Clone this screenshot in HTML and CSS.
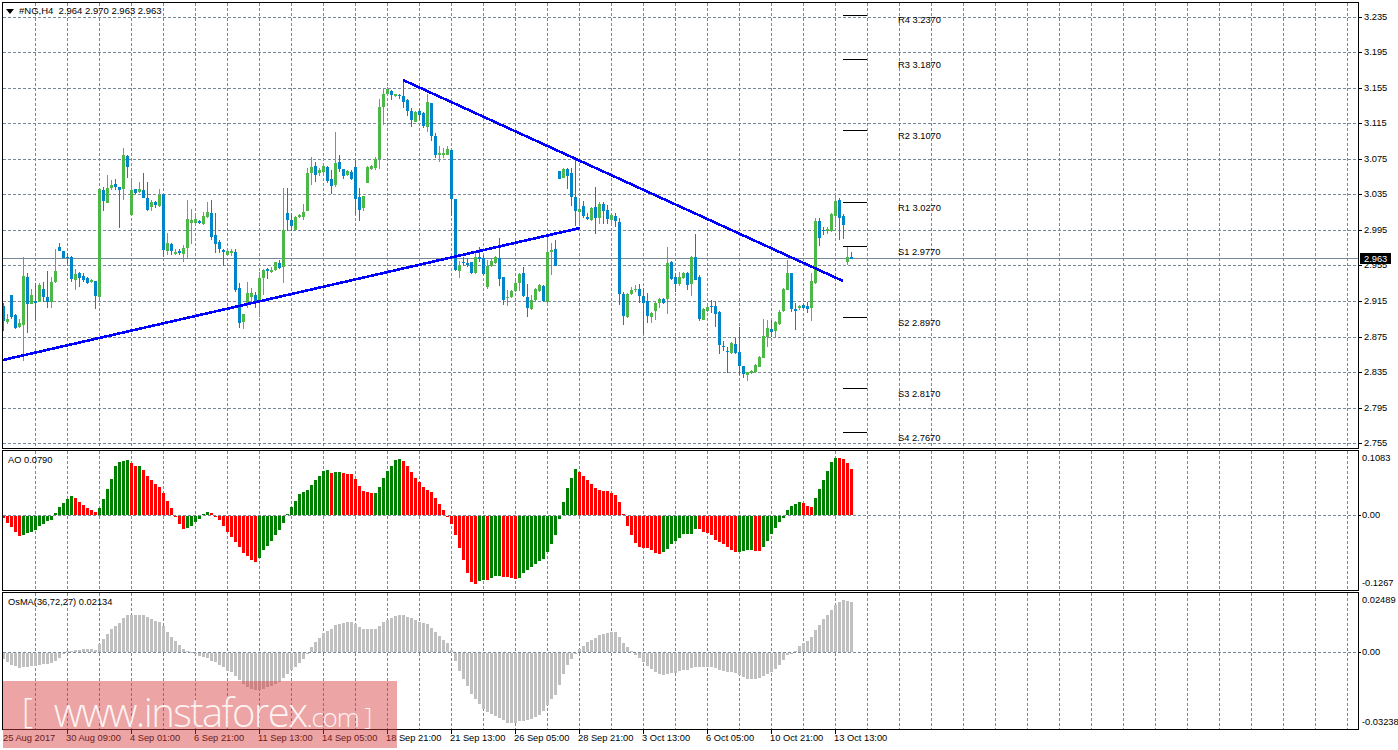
FILE: index.html
```html
<!DOCTYPE html>
<html lang="en">
<head>
<meta charset="utf-8">
<title>#NG,H4</title>
<link rel="stylesheet" href="styles.css">
</head>
<body>
<div class="terminal">
  <section class="pane pane-main">
    <div class="plot">
      <svg id="main" class="canvas" viewBox="3 3 1355 445" width="1355" height="445">
        <g id="main-layer"></g>
        <g class="lbl">
          <text x="898" y="23">R4 3.2370</text>
          <text x="898" y="68">R3 3.1870</text>
          <text x="898" y="139">R2 3.1070</text>
          <text x="898" y="211">R1 3.0270</text>
          <text x="898" y="255">S1 2.9770</text>
          <text x="898" y="326">S2 2.8970</text>
          <text x="898" y="397">S3 2.8170</text>
          <text x="898" y="441">S4 2.7670</text>
        </g>
      </svg>
      <div class="legend legend-main">
        <svg class="arrow" viewBox="0 0 8 5" width="8" height="5"><polygon points="0,0 8,0 4,5"></polygon></svg>
        <span>#NG,H4&nbsp; 2.964 2.970 2.963 2.963</span>
      </div>
    </div>
    <svg class="axis" viewBox="1359 2 39 447" width="39" height="447">
      <g id="price-ticks"></g>
      <g class="lbl">
        <text x="1364" y="20">3.235</text>
        <text x="1364" y="55">3.195</text>
        <text x="1364" y="91">3.155</text>
        <text x="1364" y="126">3.115</text>
        <text x="1364" y="162">3.075</text>
        <text x="1364" y="197">3.035</text>
        <text x="1364" y="233">2.995</text>
        <text x="1364" y="268">2.955</text>
        <text x="1364" y="304">2.915</text>
        <text x="1364" y="340">2.875</text>
        <text x="1364" y="375">2.835</text>
        <text x="1364" y="411">2.795</text>
        <text x="1364" y="446">2.755</text>
      </g>
      <rect class="price-box" x="1360" y="253" width="31" height="11"></rect>
      <text class="price-now" x="1364" y="262">2.963</text>
    </svg>
  </section>

  <section class="pane pane-ao">
    <div class="plot">
      <svg id="ao" class="canvas" viewBox="3 451 1355 139" width="1355" height="139"></svg>
      <div class="legend">AO 0.0790</div>
    </div>
    <svg class="axis" viewBox="1359 450 39 141" width="39" height="141">
      <line class="tick" x1="1359" x2="1361" y1="515.5" y2="515.5"></line>
      <g class="lbl">
        <text x="1362" y="461">0.1083</text>
        <text x="1362" y="518">0.00</text>
        <text x="1362" y="586">-0.1267</text>
      </g>
    </svg>
  </section>

  <section class="pane pane-osma">
    <div class="plot">
      <svg id="osma" class="canvas" viewBox="3 593 1355 136" width="1355" height="136"></svg>
      <div class="legend">OsMA(36,72,27) 0.02134</div>
    </div>
    <svg class="axis" viewBox="1359 592 39 138" width="39" height="138">
      <line class="tick" x1="1359" x2="1361" y1="652.5" y2="652.5"></line>
      <g class="lbl">
        <text x="1362" y="603">0.02489</text>
        <text x="1362" y="655">0.00</text>
        <text x="1362" y="725">-0.03238</text>
      </g>
    </svg>
  </section>

  <svg id="time" class="time-axis" viewBox="2 730 1396 20" width="1396" height="20">
    <g class="lbl">
      <text x="3" y="741">25 Aug 2017</text>
      <text x="66" y="741">30 Aug 09:00</text>
      <text x="130" y="741">4 Sep 01:00</text>
      <text x="194" y="741">6 Sep 21:00</text>
      <text x="258" y="741">11 Sep 13:00</text>
      <text x="322" y="741">14 Sep 05:00</text>
      <text x="386" y="741">18 Sep 21:00</text>
      <text x="450" y="741">21 Sep 13:00</text>
      <text x="514" y="741">26 Sep 05:00</text>
      <text x="578" y="741">28 Sep 21:00</text>
      <text x="642" y="741">3 Oct 13:00</text>
      <text x="706" y="741">6 Oct 05:00</text>
      <text x="770" y="741">10 Oct 21:00</text>
      <text x="834" y="741">13 Oct 13:00</text>
    </g>
  </svg>

  <div class="watermark">
    <span class="wm-open">[</span>
    <span class="wm-site">www.instaforex<span class="wm-com">.com</span></span>
    <span class="wm-close">]</span>
  </div>
</div>
<script src="chart.js"></script>
</body>
</html>
```
FILE: styles.css
```css
* { box-sizing: border-box; }
html, body { margin: 0; padding: 0; background: #fff; }
body { width: 1398px; height: 750px; overflow: hidden; }

.terminal {
  position: relative;
  width: 1398px;
  height: 750px;
  padding: 2px 0 0 2px;
  display: flex;
  flex-direction: column;
  font-family: "Liberation Sans", Arial, sans-serif;
  color: #000;
}

.pane { display: flex; flex: none; }
.pane-main { height: 447px; margin-bottom: 1px; }
.pane-ao { height: 141px; margin-bottom: 1px; }
.pane-osma { height: 138px; }

.plot {
  position: relative;
  flex: none;
  width: 1357px;
  border: 1px solid #000;
  overflow: hidden;
}

.canvas, .axis, .time-axis { display: block; flex: none; }

.legend {
  position: absolute;
  left: 5px;
  top: 3px;
  font-size: 9.3px;
  line-height: 12px;
  white-space: nowrap;
  display: flex;
  align-items: center;
}
.legend-main { left: 3px; top: 2px; gap: 5px; font-size: 9.5px; }
.arrow { fill: #000; display: block; }

.lbl text, .price-now {
  font-family: "Liberation Sans", Arial, sans-serif;
  font-size: 9.3px;
  fill: #000;
}
.price-box { fill: #000; }
.price-now { fill: #fff; }

.grid { stroke: #778899; stroke-width: 1; shape-rendering: crispEdges; fill: none; stroke-dasharray: 3 2; }
.price-line { stroke: #778899; stroke-width: 1; shape-rendering: crispEdges; }
.tick { stroke: #000; stroke-width: 1; shape-rendering: crispEdges; }
.pivot { stroke: #000; stroke-width: 1; shape-rendering: crispEdges; }
.trend { stroke: #0000ff; stroke-width: 2.6; shape-rendering: crispEdges; }
.bull { fill: #4db848; }
.bear { fill: #0085c8; }
.up { fill: #008000; }
.down { fill: #ff0000; }
.osma-bar { fill: #c0c0c0; }
.bar { shape-rendering: crispEdges; }

.watermark {
  position: absolute;
  left: 3px;
  top: 681px;
  width: 394px;
  height: 67px;
  background: rgba(215, 60, 60, 0.467);
  color: rgba(255, 255, 255, 0.88);
  font-family: "Open Sans", sans-serif;
  font-weight: 300;
  display: flex;
  align-items: flex-start;
  padding-left: 19px;
  line-height: 1;
}
.wm-open { font-size: 34px; margin-top: 12px; }
.wm-site { font-size: 40px; margin: 11px 0 0 21px; letter-spacing: -1.6px; white-space: nowrap; }
.wm-com { font-size: 26px; letter-spacing: -1.2px; }
.wm-close { font-size: 24px; margin: 23px 0 0 6px; }
```
FILE: chart.js
```javascript
var NS = 'http://www.w3.org/2000/svg';

function el(parent, name, attrs) {
  var n = document.createElementNS(NS, name);
  for (var k in attrs) n.setAttribute(k, attrs[k]);
  parent.appendChild(n);
  return n;
}

/* candles: body top, body bottom, high, low (chart pixels), g = bull, b = bear */
var candles = [
[306,321,303,331,'b'],[319,322,314,324,'g'],[295,317,295,319,'b'],[315,328,314,329,'b'],[323,327,319,328,'g'],
[276,325,257,361,'g'],[277,304,273,333,'b'],[295,304,289,304,'g'],[301,303,283,321,'b'],[285,302,283,302,'g'],
[289,297,282,302,'b'],[297,302,271,308,'b'],[282,302,277,308,'g'],[271,282,249,283,'g'],[247,251,243,251,'b'],
[251,258,251,258,'b'],[257,258,253,264,'b'],[257,279,256,282,'b'],[274,280,269,290,'g'],[273,278,272,287,'b'],
[276,280,273,282,'b'],[278,283,277,284,'b'],[280,282,279,283,'g'],[281,296,281,309,'b'],[189,297,189,299,'g'],
[190,201,187,211,'b'],[188,203,175,203,'g'],[185,188,180,190,'g'],[184,187,179,190,'b'],[187,190,187,228,'b'],
[155,189,148,200,'g'],[156,167,155,178,'b'],[190,215,180,215,'g'],[189,193,189,194,'b'],[189,192,182,193,'g'],
[190,198,173,198,'b'],[198,210,182,211,'b'],[202,207,200,211,'g'],[202,205,201,208,'b'],[195,206,189,207,'g'],
[194,250,194,257,'b'],[243,251,233,255,'g'],[244,251,243,255,'b'],[252,254,249,255,'g'],[251,253,249,255,'b'],
[248,254,245,262,'g'],[219,248,200,258,'g'],[220,223,209,244,'g'],[219,223,215,226,'g'],[221,223,220,224,'b'],
[216,224,212,225,'g'],[212,217,202,218,'g'],[213,237,200,240,'b'],[235,244,213,253,'b'],[242,249,240,253,'b'],
[250,252,249,266,'b'],[251,255,249,256,'g'],[251,253,249,256,'g'],[252,290,249,292,'b'],[288,323,283,328,'b'],
[314,322,314,329,'g'],[293,303,282,308,'g'],[293,297,288,303,'g'],[295,303,292,308,'b'],[278,302,272,317,'g'],
[270,278,269,295,'g'],[269,271,268,279,'b'],[270,272,267,273,'g'],[262,270,262,271,'g'],[263,268,260,269,'b'],
[230,267,188,283,'g'],[213,220,188,231,'b'],[220,226,213,231,'b'],[217,230,216,231,'g'],[215,217,214,218,'g'],
[212,217,204,220,'g'],[173,211,168,211,'g'],[167,173,157,185,'g'],[166,175,162,182,'b'],[170,173,168,176,'g'],
[166,172,165,173,'g'],[167,181,166,183,'b'],[179,186,170,194,'b'],[163,185,132,187,'g'],[162,169,155,172,'b'],
[169,176,169,179,'b'],[171,175,170,176,'g'],[172,179,170,180,'b'],[167,199,160,215,'b'],[197,210,188,221,'b'],
[196,208,196,211,'g'],[167,183,166,183,'g'],[166,169,165,170,'g'],[159,168,157,170,'g'],[107,159,99,169,'g'],
[94,107,88,125,'g'],[89,94,87,95,'g'],[91,95,90,100,'b'],[94,96,94,97,'g'],[95,96,94,99,'b'],
[96,102,80,108,'b'],[100,111,99,116,'b'],[111,120,108,127,'b'],[112,122,111,122,'g'],[111,115,109,120,'b'],
[113,126,112,128,'b'],[102,127,94,132,'g'],[103,136,103,141,'b'],[136,155,133,158,'b'],[153,155,146,162,'g'],
[153,155,148,158,'g'],[149,155,146,155,'g'],[150,199,150,216,'b'],[199,270,199,271,'b'],[265,271,261,278,'g'],
[262,263,257,266,'b'],[263,265,258,267,'b'],[262,273,262,274,'b'],[257,273,253,274,'g'],[257,259,247,262,'b'],
[258,274,255,275,'b'],[266,287,260,289,'g'],[261,266,259,267,'g'],[257,263,256,264,'g'],[258,279,238,286,'b'],
[277,300,277,305,'b'],[297,298,290,306,'g'],[291,297,290,298,'g'],[283,291,281,292,'g'],[274,283,273,291,'g'],
[273,296,267,297,'b'],[297,308,284,317,'b'],[300,309,295,310,'g'],[289,300,288,301,'g'],[285,291,284,292,'g'],
[286,301,285,302,'b'],[252,302,235,305,'g'],[250,252,243,275,'g'],[249,266,240,266,'b'],[171,179,171,179,'b'],
[169,178,168,178,'g'],[169,176,168,189,'b'],[173,197,168,206,'b'],[197,211,158,226,'b'],[209,212,201,226,'g'],
[206,216,201,218,'b'],[217,219,213,220,'b'],[208,220,207,221,'g'],[207,218,187,234,'b'],[204,218,202,224,'g'],
[204,211,202,224,'b'],[210,219,205,224,'b'],[215,220,214,226,'g'],[216,221,213,227,'b'],[222,294,218,305,'b'],
[294,316,292,325,'b'],[294,317,293,318,'g'],[290,294,287,295,'g'],[289,290,285,292,'g'],[289,296,284,303,'b'],
[296,303,288,334,'b'],[301,316,293,323,'b'],[313,317,312,323,'g'],[303,311,302,320,'g'],[299,303,298,308,'g'],
[299,303,298,304,'b'],[263,299,247,314,'g'],[262,279,261,280,'b'],[277,284,273,292,'b'],[277,284,272,286,'g'],
[273,278,272,279,'g'],[273,285,272,290,'b'],[257,284,256,296,'g'],[257,280,234,280,'b'],[277,319,275,321,'b'],
[309,320,308,320,'g'],[307,311,306,312,'g'],[306,307,300,313,'b'],[306,314,301,327,'b'],[312,345,311,354,'b'],
[346,347,341,351,'b'],[351,352,347,373,'b'],[343,353,342,354,'g'],[344,353,338,354,'b'],[352,366,327,375,'b'],
[366,374,366,378,'b'],[372,375,372,381,'g'],[371,373,370,374,'g'],[365,372,364,373,'g'],[357,367,356,367,'g'],
[336,358,319,358,'g'],[328,337,320,347,'g'],[329,332,320,337,'b'],[322,331,321,337,'g'],[312,324,310,325,'g'],
[289,311,288,312,'g'],[273,290,260,290,'g'],[273,309,273,312,'b'],[309,311,303,330,'b'],[306,308,305,310,'g'],
[305,308,304,309,'b'],[306,309,302,313,'b'],[281,308,273,321,'g'],[221,283,218,284,'g'],[221,238,218,246,'b'],
[230,231,227,235,'b'],[229,231,227,234,'g'],[214,231,213,232,'g'],[201,216,194,227,'g'],[200,218,198,240,'b'],
[216,225,214,239,'b'],[257,262,247,265,'g'],[257,259,252,259,'b']
];

var ao = ('204r 219r 232r 246r 258r 255g 250g 246g 240g 228g 222g 213g 210g ' +
'189g 171g 160g 147g 138g 144r 156r 165r 174r 180r 186r 174g 147g 117g 87g 48g 36g 33g 30g 39r 48r 48g 60r 78r 90r 102r 111r 129r 153r 174r 198r ' +
'222r 237r 234g 228g 216g 207g 192g 186g 189r 198r 210r 228r 246r 261r 276r 291r 309r 318r 330r 336r 324g 300g 288g 273g 255g 240g 219g 192g ' +
'171g 153g 132g 126g 120g 105g 90g 78g 63g 60g 69r 66g 66g 69r 72r 72r 87r 108r 123r 126r 129r 129g 111g 84g 63g 48g 30g 27g 33r 48r 66r 84r 96r ' +
'111r 120r 126r 144r 162r 180r 198r 222r 255r 294r 330r 369r 396r 402r 393g 390g 390r 384g 378g 378g 381r 381r 384r 387r 384g 369g 360g 351g 342g ' +
'333g 327g 306g 282g 255g 207g 156g 114g 84g 57g 66r 78r 90r 102r 114r 120r 123r 123r 129r 135r 156r 192r 228r 255r 279r 291r 294r 294r 300r 309r 312r ' +
'306g 297g 282g 273g 264g 252g 252g 252g 237g 237r 246r 249r 255r 270r 276r 282r 291r 300r 306r 306g 303g 300g 300g 303r 303r 291g 273g 252g 234g 216g ' +
'204g 180g 168g 162g 156g 159r 168r 171r 144g 117g 90g 63g 36g 24g 24r 27r 39r 57r').split(' ');

var osma = [207,216,225,228,234,231,231,228,228,225,222,222,219,213,204,192,183,183,180,180,177,177,177,180,162,147,132,117,108,99,84,75,75,75,75,75,81,87,93,96,108,126,141,153,165,177,183,186,189,198,201,204,213,216,225,231,243,246,258,270,282,291,297,300,300,297,291,288,282,276,264,252,240,231,219,207,189,171,156,144,129,123,117,105,102,99,96,96,102,111,117,117,117,117,108,96,90,84,78,75,75,81,84,90,96,99,102,114,126,138,150,159,180,213,243,267,288,312,327,342,357,366,372,378,384,390,399,399,399,393,393,390,387,381,375,363,345,327,315,285,252,225,207,192,177,168,156,150,144,135,132,129,126,126,141,159,171,183,195,204,216,228,237,246,252,255,252,249,249,243,240,240,234,231,231,231,231,231,234,240,243,246,246,249,255,261,267,267,267,264,258,252,246,237,225,210,195,189,183,168,159,153,141,120,105,87,75,60,45,36,30,33,36];

var hLines = [17,52,88,123,159,194,230,265,301,337,372,408,443];
var pivots = [15,59,130,202,246,317,388,432];

function vGrid(svg, y1, y2) {
  for (var x = 35; x <= 1347; x += 32) {
    el(svg, 'line', {'class': 'grid', x1: x + .5, x2: x + .5, y1: y1, y2: y2});
  }
}
function hGrid(svg, y) {
  el(svg, 'line', {'class': 'grid', x1: 3, x2: 1358, y1: y + .5, y2: y + .5});
}
function barRect(svg, k, top, bottom, cls) {
  el(svg, 'rect', {'class': 'bar ' + cls, x: 2 + 4 * k, y: top, width: 3, height: Math.max(1, bottom - top)});
}

/* main pane */
var m = document.getElementById('main-layer');
vGrid(m, 3, 448);
hLines.forEach(function (y) { hGrid(m, y); });
el(m, 'line', {'class': 'price-line', x1: 3, x2: 1358, y1: 258.5, y2: 258.5});
candles.forEach(function (c, k) {
  var cls = c[4] === 'g' ? 'bull' : 'bear';
  el(m, 'rect', {'class': 'bar ' + cls, x: 3 + 4 * k, y: c[2], width: 1, height: c[3] - c[2]});
  barRect(m, k, c[0], c[1], cls);
});
[[3, 360, 580, 228], [403, 80, 843, 281]].forEach(function (l) {
  el(m, 'line', {'class': 'trend', x1: l[0], y1: l[1], x2: l[2], y2: l[3]});
});
pivots.forEach(function (y) {
  el(m, 'line', {'class': 'pivot', x1: 843, x2: 867, y1: y + .5, y2: y + .5});
});

/* price axis ticks */
var t = document.getElementById('price-ticks');
hLines.forEach(function (y) {
  el(t, 'line', {'class': 'tick', x1: 1359, x2: 1362, y1: y + .5, y2: y + .5});
});

/* AO */
var a = document.getElementById('ao');
vGrid(a, 451, 590);
hGrid(a, 515);
ao.forEach(function (v, k) {
  var y = Math.round(450 + parseInt(v, 10) / 3);
  var cls = v.slice(-1) === 'g' ? 'up' : 'down';
  if (y <= 515) barRect(a, k, y, 515, cls); else barRect(a, k, 516, y, cls);
});

/* OsMA */
var o = document.getElementById('osma');
vGrid(o, 593, 729);
hGrid(o, 652);
osma.forEach(function (v, k) {
  var y = Math.round(590 + v / 3);
  if (y <= 652) barRect(o, k, y, 652, 'osma-bar'); else barRect(o, k, 653, y, 'osma-bar');
});

/* time axis ticks */
var ta = document.getElementById('time');
for (var x = 67; x <= 835; x += 64) {
  el(ta, 'line', {'class': 'tick', x1: x + .5, x2: x + .5, y1: 730, y2: 734});
}
```
